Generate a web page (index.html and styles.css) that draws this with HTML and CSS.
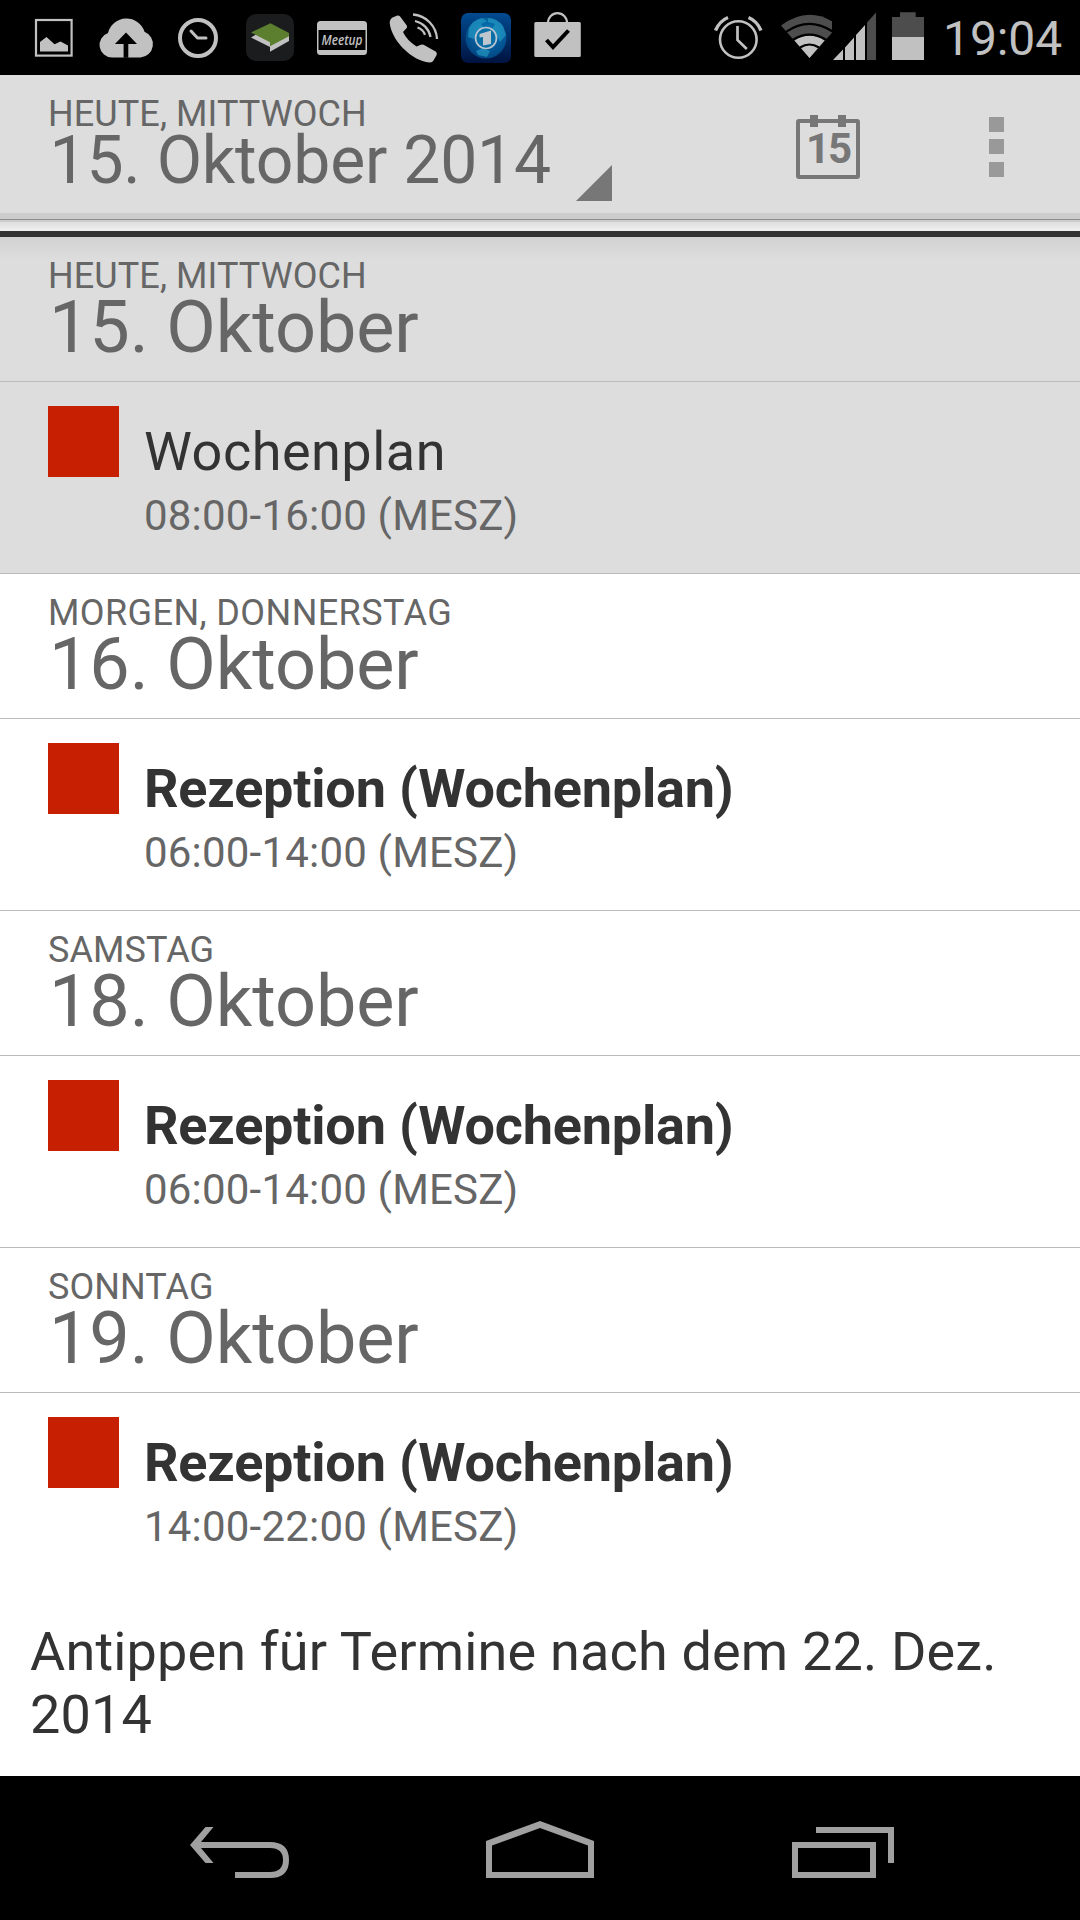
FILE: index.html
```
<!DOCTYPE html>
<html lang="de">
<head>
<meta charset="utf-8">
<title>Kalender</title>
<link rel="stylesheet" href="styles.css">
</head>
<body>
<div class="screen">
  <div class="status-bar">
    <div class="status-group">
      <svg width="58" height="75" viewBox="26 0 58 75"><rect x="36" y="20" width="35.6" height="35.6" fill="none" stroke="#c1c1c1" stroke-width="2.2"/><path d="M40 42l6.500-5 8 7.200 6-2.700 7.500 4v6H40z" fill="#c1c1c1"/></svg>
      <svg width="84" height="75" viewBox="84 0 84 75"><path d="M112 57.500a12.600 12.600 0 0 1-4-24.500 19 19 0 0 1 36.500-1.300 13.400 13.400 0 0 1-4 25.800z" fill="#c1c1c1"/><path d="M126 32.500l11 11.500h-8.700v13.800h-4.700V44h-8.700z" fill="#000"/></svg>
      <svg width="64" height="75" viewBox="168 0 64 75" fill="none" stroke="#c1c1c1"><circle cx="198" cy="38" r="18" stroke-width="4"/><path d="M191 31l6.500 7H206" stroke-width="3" stroke-linecap="round" stroke-linejoin="round"/></svg>
      <svg width="76" height="75" viewBox="232 0 76 75"><rect x="246" y="14" width="48" height="47" rx="10" fill="#1b1c1e"/><path d="M251 37.500l5-3L289 35v6l-19 10.800V47z" fill="#c1c1c1"/><path d="M251 32.500l19.500-9.300L289 33v3.200L270 46.300v-4z" fill="#5b7f2e"/></svg>
      <svg width="70" height="75" viewBox="308 0 70 75"><rect x="317" y="21" width="50" height="34" rx="3.500" fill="#c1c1c1"/><path d="M318.500 30h47v20h-47z" fill="#000"/><text class="meetup" x="321.500" y="45" textLength="41" lengthAdjust="spacingAndGlyphs">Meetup</text></svg>
      <svg width="74" height="75" viewBox="378 0 74 75"><path d="M392.500 17.500l5-2q2-.5 3 1.500l6.300 8.500q1 2-1 3.500l-2.800 3q4 8.500 13.500 14.500l4.500-1.800q2-.8 3.500.5l11.500 6.500q1.500 1.500.5 3.500l-3.500 6q-2 2-7 .8C408 58 391 38 389.700 23q0-4 2.800-5.500z" fill="#c1c1c1"/><path d="M413 14.500A26 26 0 0 1 437 39M415 21a20 20 0 0 1 15.500 16M417.500 27.500a12 12 0 0 1 7.500 7.300" fill="none" stroke="#c1c1c1" stroke-width="2.300"/></svg>
      <svg width="70" height="75" viewBox="452 0 70 75">
        <defs><linearGradient id="tile" x2="0" y2="1"><stop offset="0" stop-color="#004b91"/><stop offset="1" stop-color="#001340"/></linearGradient><radialGradient id="globe" cx=".55" cy=".35" r=".65"><stop offset="0" stop-color="#087bb8"/><stop offset=".65" stop-color="#045898"/><stop offset="1" stop-color="#034682"/></radialGradient></defs>
        <rect x="461" y="13" width="50" height="50" rx="7" fill="url(#tile)"/><circle cx="486" cy="38" r="20.500" fill="url(#globe)"/>
        <path d="M469 28q4-8 13-10l5 3-6 3 2 3-7 5-2 7-6-2zM488 18q9 0 15 8l3 9-6 7-4-8-4-5 3-5-7-2zM476 51l7-3 7 3-3 6-9-2z" fill="#259cc4" opacity=".65"/>
        <circle cx="486" cy="38" r="10.500" fill="#0b70a7" stroke="#b8c4cf" stroke-width="1.700"/><path d="M479.500 34l11.500-3.500V44l-8 1.500V37l-3.500.5z" fill="#bec6ce"/></svg>
      <svg width="70" height="75" viewBox="522 0 70 75"><path d="M548 23a9.500 9.800 0 0 1 19 0" fill="none" stroke="#c1c1c1" stroke-width="2.200"/><rect x="534.300" y="22" width="46.500" height="35" rx="1.500" fill="#c1c1c1"/><path d="M546.500 40l6.500 7 15.500-16.500" fill="none" stroke="#000" stroke-width="4"/></svg>
    </div>
    <div class="status-group">
      <svg width="64" height="75" viewBox="706 0 64 75" fill="none" stroke="#c1c1c1"><circle cx="738.300" cy="39.500" r="18.300" stroke-width="2.600"/><path d="M715.500 30.500q4-9.500 12.500-13M761 30.500q-4-9.500-12.500-13" stroke-width="3.400"/><path d="M737.500 26v14l9.300 9" stroke-width="2.700"/></svg>
      <svg width="62" height="75" viewBox="770 0 62 75"><path d="M781 25.500q28.500-21.500 57.500 0L809.500 58z" fill="#4d4d4d"/><path d="M794.500 40.500q15-10 30 0L809.500 58z" fill="#c1c1c1"/><path d="M786 31.800q23.500-16 47 0M793 39.800q16.500-10.500 33 0M800 47.500q9.500-6 19 0" fill="none" stroke="#000" stroke-width="2.200"/></svg>
      <svg width="52" height="75" viewBox="832 0 52 75"><path d="M833 60l10-10.500V60zM845 60V47.500l9-10V60zM856 60V35l9-10v35z" fill="#c1c1c1"/><path d="M867 60V22.500L876 12.500V60z" fill="#4d4d4d"/></svg>
      <svg width="58" height="75" viewBox="884 0 58 75"><path d="M900 12.300h15.700V17H924v20h-32V17h8z" fill="#4d4d4d"/><path d="M892 37h32v23h-32z" fill="#c1c1c1"/></svg>
      <span class="clock">19:04</span>
    </div>
  </div>

  <header class="action-bar">
    <div class="action-date">
      <div class="weekday">HEUTE, MITTWOCH</div>
      <div class="title">15. Oktober 2014</div>
    </div>
    <svg class="spinner-mark" width="36" height="36" viewBox="0 0 36 36"><path d="M36 0v36H0z" fill="#777"/></svg>
    <div class="actions">
      <svg width="64" height="64" viewBox="0 0 64 64"><rect x="2" y="6" width="60" height="56" rx="1" fill="none" stroke="#777" stroke-width="4"/><path d="M14 0h8v12h-8zM42 0h8v12h-8z" fill="#777"/><text class="today" x="10" y="48" textLength="46">15</text></svg>
      <svg width="15" height="60" viewBox="0 0 15 60"><path d="M0 0h15v15H0zM0 22h15v15H0zM0 45h15v15H0z" fill="#999"/></svg>
    </div>
  </header>
  <div class="bar-edge"></div>
  <div class="now-line"></div>

  <main class="agenda">
    <section class="day today-day">
      <div class="day-head"><div class="weekday">HEUTE, MITTWOCH</div><div class="date">15. Oktober</div></div>
      <div class="event"><div class="swatch"></div><div class="event-text"><div class="name">Wochenplan</div><div class="time">08:00-16:00 (MESZ)</div></div></div>
    </section>
    <section class="day">
      <div class="day-head"><div class="weekday spaced">MORGEN, DONNERSTAG</div><div class="date">16. Oktober</div></div>
      <div class="event"><div class="swatch"></div><div class="event-text"><div class="name strong">Rezeption (Wochenplan)</div><div class="time">06:00-14:00 (MESZ)</div></div></div>
    </section>
    <section class="day">
      <div class="day-head"><div class="weekday">SAMSTAG</div><div class="date">18. Oktober</div></div>
      <div class="event"><div class="swatch"></div><div class="event-text"><div class="name strong">Rezeption (Wochenplan)</div><div class="time">06:00-14:00 (MESZ)</div></div></div>
    </section>
    <section class="day">
      <div class="day-head"><div class="weekday">SONNTAG</div><div class="date">19. Oktober</div></div>
      <div class="event last"><div class="swatch"></div><div class="event-text"><div class="name strong">Rezeption (Wochenplan)</div><div class="time">14:00-22:00 (MESZ)</div></div></div>
    </section>
    <div class="more">Antippen für Termine nach dem 22. Dez. 2014</div>
  </main>

  <nav class="nav-bar">
    <svg width="100" height="58" viewBox="190 1821 100 58"><path d="M190 1845l15.500-18h8l-12.500 15h69q19 0 19 18t-19 18h-35v-6h35q13 0 13-12t-13-12h-69l12.500 15h-8z" fill="#a0a0a0"/></svg>
    <svg width="108" height="58" viewBox="486 1821 108 58"><path fill-rule="evenodd" d="M540 1821l54 20v37H486v-37zM540 1828l-48 17.500V1872h96v-26.500z" fill="#a0a0a0"/></svg>
    <svg width="104" height="58" viewBox="792 1821 104 58"><path d="M795 1845h78v30h-78z" fill="none" stroke="#a0a0a0" stroke-width="6"/><path d="M816 1830h75v33" fill="none" stroke="#a0a0a0" stroke-width="6"/></svg>
  </nav>
</div>
</body>
</html>
```
FILE: styles.css
```
* { box-sizing: border-box; }
body { margin: 0; font-family: Roboto, sans-serif; background: #fff; }
svg { display: block; flex: none; }
.screen { width: 1080px; height: 1920px; display: flex; flex-direction: column; overflow: hidden; }

.status-bar { height: 75px; flex: none; background: #000; display: flex; justify-content: space-between; padding: 0 18px 0 26px; }
.status-group { display: flex; }
.clock { width: 120px; padding-left: 1px; font-size: 48px; line-height: 77px; letter-spacing: -.1px; color: #c1c1c1; white-space: nowrap; }
.meetup { font: italic 600 15px "Open Sans", sans-serif; fill: #c1c1c1; }

.action-bar { height: 138px; flex: none; background: #ddd; display: flex; padding: 21px 76px 0 48px; color: #666; }
.action-date { width: 528px; white-space: nowrap; }
.weekday { font-size: 36px; line-height: 36px; letter-spacing: .09px; white-space: nowrap; }
.weekday.spaced { letter-spacing: .41px; }
.title { padding-left: 1.5px; font-size: 66px; line-height: 57px; letter-spacing: -.2px; }
.spinner-mark { margin-top: 69px; }
.actions { flex: 1; display: flex; justify-content: space-between; align-items: flex-start; padding: 19px 0 0 184px; }
.actions svg + svg { margin-top: 2px; }
.today { font-size: 42px; font-weight: 700; fill: #777; }
.bar-edge { height: 18px; flex: none; background: linear-gradient(#ccc 0 6px, #8e8e8e 6px 7px, #ccc 7px 9px, #dedede 9px, #f0f0f0 18px); }
.now-line { height: 6px; flex: none; background: #333; }

.agenda { flex: 1; background: #fff; }
.today-day { background: linear-gradient(#d2d2d2, #ddd 22px); }
.day-head { height: 145px; padding: 21px 48px 0; color: #666; border-bottom: 1px solid #bbb; }
.date { padding-left: 1px; font-size: 72px; line-height: 67px; letter-spacing: -.1px; }
.event { height: 192px; display: flex; gap: 25px; padding: 24px 48px 0; border-bottom: 1px solid #bbb; }
.event.last { border-bottom: 0; }
.swatch { width: 71px; height: 71px; flex: none; background: #c71f01; }
.event-text { padding-top: 14px; white-space: nowrap; }
.name { font-size: 54px; line-height: 64px; letter-spacing: .5px; color: #333; }
.name.strong { font-weight: 700; letter-spacing: -.22px; }
.time { margin-top: 7px; font-size: 42px; line-height: 50px; letter-spacing: .2px; color: #666; }
.more { padding: 35px 60px 0 30px; font-size: 54px; line-height: 63px; letter-spacing: .17px; color: #333; }

.nav-bar { height: 144px; flex: none; background: #000; display: flex; justify-content: space-between; padding: 45px 184px 0 190px; }
.nav-bar svg:nth-child(2) { margin-left: -2px; }
```
